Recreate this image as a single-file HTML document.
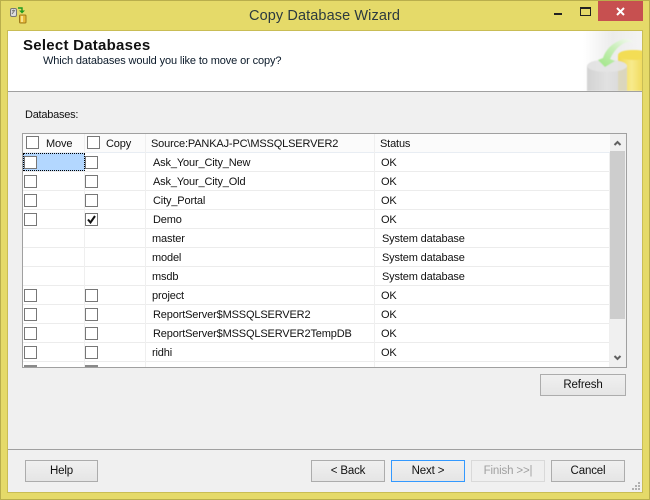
<!DOCTYPE html>
<html><head><meta charset="utf-8"><style>
html,body{margin:0;padding:0;width:650px;height:500px;overflow:hidden;background:#e5da69}
body{position:relative;font-family:"Liberation Sans",sans-serif;font-size:11px;letter-spacing:-.15px;color:#111}
div{position:absolute;box-sizing:border-box}
.t{white-space:nowrap;line-height:14px;height:14px;margin-top:1px}
.hl{left:23px;width:587px;height:1px;background:#ececec}
.vl{width:1px;background:#efefef}
.c{width:13px;height:13px;border:1px solid #777;background:#fff}
.b{height:22px;border:1px solid #acacac;background:linear-gradient(#f0f0f0,#e5e5e5);text-align:center;line-height:21px;color:#111;font-size:11.5px}
</style></head><body>
<div style="left:0;top:0;width:650px;height:500px;border:1px solid #b9ae4c"></div>
<div style="left:7px;top:30px;width:636px;height:463px;background:#f0f0f0;border:1px solid #c9bd55"></div>
<svg style="position:absolute;left:8px;top:4px" width="22" height="22" viewBox="8 4 22 22">
<rect x="10.5" y="8.5" width="6" height="8" rx="1.5" fill="#ddd" stroke="#777"/><path d="M12 14l3-4M12 11l2-1" stroke="#777"/>
<path d="M18 8h4v3" fill="none" stroke="#1f9a1f" stroke-width="1.4"/><path d="M19 10.5h6l-3 3z" fill="#1f9a1f"/>
<rect x="19.5" y="15" width="6.5" height="8" rx="1" fill="#e9b93a" stroke="#a07a1a"/><rect x="21" y="16" width="2" height="6" fill="#f8e28c"/>
</svg>
<div class="t" style="left:249px;top:8px;margin-top:0;font-size:14.5px;line-height:16px;height:16px;color:#2c3a3f;letter-spacing:.1px">Copy Database Wizard</div>
<div style="left:554px;top:13px;width:8px;height:2px;background:#222"></div>
<div style="left:580px;top:7px;width:11px;height:9px;border:1px solid #222;border-top-width:2px"></div>
<div style="left:598px;top:1px;width:45px;height:20px;background:#c75050"></div>
<svg style="position:absolute;left:615px;top:6px" width="11" height="11"><path d="M2 2l7 7M9 2l-7 7" stroke="#fff" stroke-width="2"/></svg>

<div style="left:8px;top:31px;width:634px;height:60px;background:#fff"></div>
<div style="left:8px;top:91px;width:634px;height:1px;background:#a0a0a0"></div>
<svg style="position:absolute;left:583px;top:31px" width="59" height="60" viewBox="0 0 59 60">
<defs><linearGradient id="g" x1="0" x2="1" y1="0" y2="0"><stop offset="0" stop-color="#fff"/><stop offset=".5" stop-color="#ececec"/><stop offset="1" stop-color="#f4f4f4"/></linearGradient>
<linearGradient id="cg" x1="0" x2="1" y1="0" y2="0"><stop offset="0" stop-color="#c8c8c8"/><stop offset=".5" stop-color="#dedede"/><stop offset="1" stop-color="#d2d2d2"/></linearGradient>
<linearGradient id="yg" x1="0" x2="1" y1="0" y2="0"><stop offset="0" stop-color="#f0d94a"/><stop offset=".45" stop-color="#f8ea8c"/><stop offset="1" stop-color="#ecd548"/></linearGradient>
<linearGradient id="ag" x1="0" x2="1" y1="1" y2="0"><stop offset="0" stop-color="#9fe585"/><stop offset=".55" stop-color="#c8efb8"/><stop offset="1" stop-color="#fafafa"/></linearGradient>
<filter id="bl"><feGaussianBlur stdDeviation=".5"/></filter></defs>
<rect width="59" height="60" fill="url(#g)"/>
<g filter="url(#bl)">
<path d="M35 25q0-6 15-6t15 6v35H35z" fill="url(#yg)"/>
<ellipse cx="51" cy="24" rx="16" ry="5" fill="#f3dd55"/>
<path d="M4 36q0-7 20-7t20 7v24H4z" fill="url(#cg)" opacity=".8"/>
<ellipse cx="24" cy="35" rx="20" ry="6" fill="#e4e4e4" opacity=".9"/>
<path d="M20 27q4-13 20-19 6-1 12 4-7-3-14 2-7 5-11 14l5 2-10 6-7-7z" fill="url(#ag)"/>
</g></svg>
<div style="left:23px;top:38px;font-size:15px;font-weight:bold;line-height:15px;letter-spacing:.25px;white-space:nowrap;color:#111">Select Databases</div>
<div class="t" style="left:43px;top:53px;color:#0b1a2a;letter-spacing:-.12px">Which databases would you like to move or copy?</div>
<div class="t" style="left:25px;top:107px;letter-spacing:-.25px">Databases:</div>

<div style="left:22px;top:133px;width:605px;height:235px;border:1px solid #a0a0a0;background:#fff;overflow:hidden"></div>
<div style="left:23px;top:134px;width:587px;height:18px;background:#fbfbfb"></div>
<div style="left:23px;top:152px;width:587px;height:1px;background:#e8edf3"></div>
<div class="hl" style="top:171px"></div><div class="hl" style="top:190px"></div><div class="hl" style="top:209px"></div><div class="hl" style="top:228px"></div><div class="hl" style="top:247px"></div><div class="hl" style="top:266px"></div><div class="hl" style="top:285px"></div><div class="hl" style="top:304px"></div><div class="hl" style="top:323px"></div><div class="hl" style="top:342px"></div><div class="hl" style="top:361px"></div>
<div class="vl" style="left:84px;top:134px;height:233px"></div><div class="vl" style="left:145px;top:134px;height:233px"></div><div class="vl" style="left:374px;top:134px;height:233px"></div><div class="vl" style="left:609px;top:153px;height:214px"></div>

<div style="left:23px;top:153px;width:62px;height:18px;background:#b3d7ff;border:1px dotted #000"></div>

<div class="c" style="left:26px;top:136px"></div><div class="t" style="left:46px;top:136px">Move</div>
<div class="c" style="left:87px;top:136px"></div><div class="t" style="left:106px;top:136px">Copy</div>
<div class="t" style="left:151px;top:136px">Source:PANKAJ-PC\MSSQLSERVER2</div>
<div class="t" style="left:380px;top:136px">Status</div>

<div class="c" style="left:24px;top:156px"></div><div class="c" style="left:85px;top:156px"></div>
<div class="c" style="left:24px;top:175px"></div><div class="c" style="left:85px;top:175px"></div>
<div class="c" style="left:24px;top:194px"></div><div class="c" style="left:85px;top:194px"></div>
<div class="c" style="left:24px;top:213px"></div><div class="c" style="left:85px;top:213px"></div>
<svg style="position:absolute;left:85px;top:213px" width="13" height="13"><path d="M3 6.5l2.500 3L10 3" fill="none" stroke="#111" stroke-width="2"/></svg>
<div class="c" style="left:24px;top:289px"></div><div class="c" style="left:85px;top:289px"></div>
<div class="c" style="left:24px;top:308px"></div><div class="c" style="left:85px;top:308px"></div>
<div class="c" style="left:24px;top:327px"></div><div class="c" style="left:85px;top:327px"></div>
<div class="c" style="left:24px;top:346px"></div><div class="c" style="left:85px;top:346px"></div>
<div style="left:24px;top:365px;width:13px;height:2px;background:#8a8a8a"></div><div style="left:85px;top:365px;width:13px;height:2px;background:#8a8a8a"></div>

<div class="t" style="left:153px;top:155px">Ask_Your_City_New</div><div class="t" style="left:381px;top:155px">OK</div>
<div class="t" style="left:153px;top:174px">Ask_Your_City_Old</div><div class="t" style="left:381px;top:174px">OK</div>
<div class="t" style="left:153px;top:193px">City_Portal</div><div class="t" style="left:381px;top:193px">OK</div>
<div class="t" style="left:153px;top:212px">Demo</div><div class="t" style="left:381px;top:212px">OK</div>
<div class="t" style="left:152px;top:231px">master</div><div class="t" style="left:382px;top:231px">System database</div>
<div class="t" style="left:152px;top:250px">model</div><div class="t" style="left:382px;top:250px">System database</div>
<div class="t" style="left:152px;top:269px">msdb</div><div class="t" style="left:382px;top:269px">System database</div>
<div class="t" style="left:152px;top:288px">project</div><div class="t" style="left:381px;top:288px">OK</div>
<div class="t" style="left:153px;top:307px">ReportServer$MSSQLSERVER2</div><div class="t" style="left:381px;top:307px">OK</div>
<div class="t" style="left:153px;top:326px">ReportServer$MSSQLSERVER2TempDB</div><div class="t" style="left:381px;top:326px">OK</div>
<div class="t" style="left:152px;top:345px">ridhi</div><div class="t" style="left:381px;top:345px">OK</div>

<div style="left:610px;top:134px;width:16px;height:233px;background:#f0f0f0"></div>
<div style="left:610px;top:151px;width:15px;height:168px;background:#cdcdcd"></div>
<svg style="position:absolute;left:610px;top:138px" width="15" height="10"><path d="M4.500 7l3-3 3 3" fill="none" stroke="#606060" stroke-width="2"/></svg>
<svg style="position:absolute;left:610px;top:353px" width="15" height="10"><path d="M4.500 3l3 3 3-3" fill="none" stroke="#606060" stroke-width="2"/></svg>

<div class="b" style="left:540px;top:374px;width:86px">Refresh</div>
<div style="left:8px;top:449px;width:634px;height:1px;background:#a0a0a0"></div>
<div class="b" style="left:25px;top:460px;width:73px">Help</div>
<div class="b" style="left:311px;top:460px;width:74px">&lt; Back</div>
<div class="b" style="left:391px;top:460px;width:74px;border-color:#3399ff">Next &gt;</div>
<div class="b" style="left:471px;top:460px;width:74px;border-color:#d9d9d9;background:#efefef;color:#a0a0a0">Finish &gt;&gt;|</div>
<div class="b" style="left:551px;top:460px;width:74px">Cancel</div>
<svg style="position:absolute;left:631px;top:481px" width="11" height="11" fill="#b0b0b0"><rect x="7" y="1" width="2" height="2"/><rect x="4" y="4" width="2" height="2"/><rect x="7" y="4" width="2" height="2"/><rect x="1" y="7" width="2" height="2"/><rect x="4" y="7" width="2" height="2"/><rect x="7" y="7" width="2" height="2"/></svg>
</body></html>
